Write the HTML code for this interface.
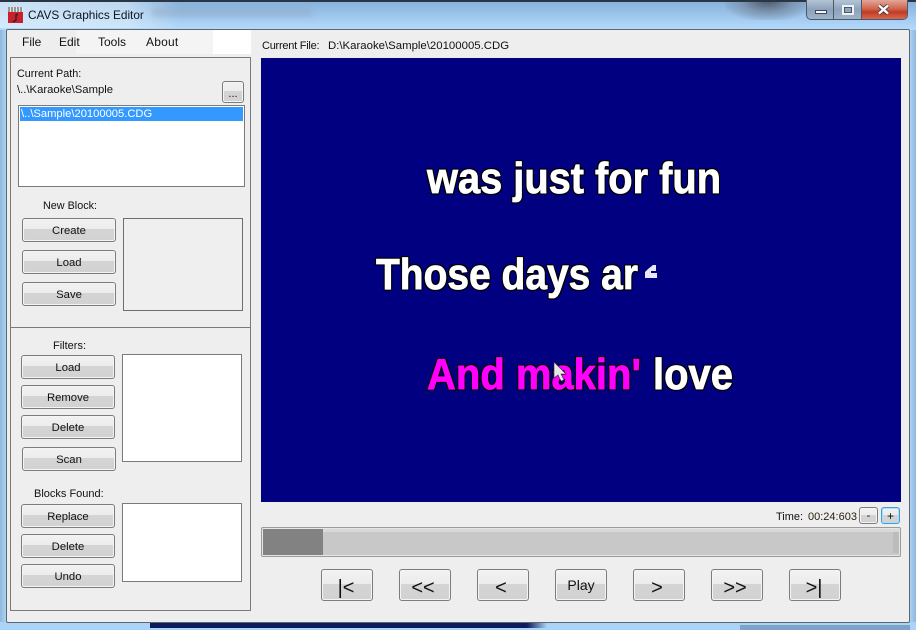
<!DOCTYPE html>
<html><head><meta charset="utf-8"><style>
html,body{margin:0;padding:0;width:916px;height:630px;overflow:hidden;background:#a9d2f5;font-family:"Liberation Sans",sans-serif;font-size:12px;color:#111}
div{position:absolute;box-sizing:border-box}
.l{white-space:nowrap;line-height:16px;font-size:11px}
.b{border:1px solid #7c7c7c;border-radius:3px;background:linear-gradient(#f2f2f2 0,#ececec 46%,#d4d4d4 46%,#d2d2d2 100%);box-shadow:inset 0 0 0 1px #f4f4f4;text-align:center;line-height:25px;white-space:nowrap;font-size:11.3px}
.n{font-size:20px;line-height:36px;top:569px;height:32px;width:52px;text-indent:-3px;background:linear-gradient(#f2f2f2 0,#ececec 46%,#d4d4d4 46%,#d2d2d2 100%)}
.w{background:#fff;border:1px solid #7a7a7a}
</style></head><body>
<div style="left:0;top:0;width:916px;height:30px;background:linear-gradient(#84afdb 0,#93bce3 30%,#a9d1f5 75%,#b6daf9 100%)"></div>
<div style="left:0;top:2px;width:180px;height:26px;background:linear-gradient(90deg,rgba(225,240,252,.75),rgba(225,240,252,.6) 70%,transparent)"></div>
<div style="left:152px;top:8px;width:160px;height:9px;background:#8da3bb;opacity:.4;filter:blur(3px)"></div>
<div style="left:725px;top:0;width:85px;height:20px;background:radial-gradient(ellipse at 50% 0,#4a5566 0,#7f98b5 45%,transparent 80%)"></div>
<div style="left:0;top:0;width:916px;height:2px;background:#2b3645"></div>
<div style="left:0;top:30px;width:7px;height:592px;background:linear-gradient(90deg,#8fb8dc,#b1d6f6)"></div>
<div style="left:909px;top:30px;width:7px;height:592px;background:linear-gradient(90deg,#b1d6f6,#8fb8dc)"></div>
<div style="left:0;top:622px;width:916px;height:8px;background:#abd3f6"></div>
<div style="left:150px;top:623px;width:377px;height:5px;background:#0d1b5c"></div>
<div style="left:527px;top:623px;width:20px;height:5px;background:linear-gradient(90deg,#0d1b5c,#abd3f6)"></div>
<div style="left:740px;top:625px;width:170px;height:5px;background:#7fa3c6"></div>

<svg style="position:absolute;left:7px;top:6px" width="17" height="18" viewBox="0 0 17 18"><rect x="1" y="6" width="15" height="11" fill="#c8202c"/><rect x="1" y="1" width="15" height="5" fill="#e8e8e8"/><path d="M2 1v5M5 1v5M8 1v5M11 1v5M14 1v5" stroke="#444" stroke-width="1"/><path d="M9 8v6l-3 2M9 8l2 1" stroke="#222" stroke-width="1.3" fill="none"/></svg>
<div class="l" style="left:28px;top:7px;font-size:11.8px;color:#0c1420">CAVS Graphics Editor</div>

<div style="left:806px;top:0;width:102px;height:20px;border:1px solid #4c5866;border-top:0;border-radius:0 0 5px 5px;overflow:hidden;background:linear-gradient(#b4c4d6,#8da2bb 50%,#9fb3c9)">
  <div style="left:26px;top:0;width:1px;height:20px;background:#4c5866"></div>
  <div style="left:54px;top:0;width:1px;height:20px;background:#4c5866"></div>
  <div style="left:55px;top:0;width:47px;height:20px;background:linear-gradient(#e2a79a,#d0624a 45%,#c23b22 60%,#d8705a)"></div>
  <div style="left:8px;top:10px;width:12px;height:4px;background:#f4f6f9;border:1px solid #3c4858"></div>
  <div style="left:35px;top:5px;width:12px;height:10px;border:2px solid #eef2f6;outline:1px solid #4c5866;outline-offset:-3px"></div>
  <svg style="position:absolute;left:70px;top:4px" width="13" height="11"><path d="M2 1.5L11 9.5M11 1.5L2 9.5" stroke="#3a3a3a" stroke-width="4"/><path d="M2 1.5L11 9.5M11 1.5L2 9.5" stroke="#fff" stroke-width="2.4"/></svg>
</div>

<div style="left:6px;top:29px;width:904px;height:594px;background:#eeeeee;border:1px solid #5d6773;border-radius:2px"></div>
<div style="left:76px;top:30px;width:137px;height:24px;background:#f4f4f4"></div>
<div style="left:213px;top:30px;width:38px;height:24px;background:#fff"></div>
<div class="l" style="left:22px;top:34px;font-size:12px">File</div>
<div class="l" style="left:59px;top:34px;font-size:12px">Edit</div>
<div class="l" style="left:98px;top:34px;font-size:12px">Tools</div>
<div class="l" style="left:146px;top:34px;font-size:12px;letter-spacing:.2px">About</div>

<div style="left:10px;top:57px;width:241px;height:554px;border:1px solid #7a7a7a"></div>
<div style="left:10px;top:327px;width:241px;height:1px;background:#7a7a7a"></div>

<div class="l" style="left:17px;top:66px;font-size:10.8px">Current Path:</div>
<div class="l" style="left:17px;top:82px;font-size:11.3px">\..\Karaoke\Sample</div>
<div class="b" style="left:222px;top:81px;width:22px;height:22px;line-height:25px;font-size:11px">...</div>
<div class="w" style="left:18px;top:105px;width:227px;height:82px"></div>
<div class="l" style="left:20px;top:107px;width:223px;height:14px;background:#3399ff;color:#fff;padding-left:1px;line-height:15px;font-size:11.2px">\..\Sample\20100005.CDG</div>

<div class="l" style="left:43px;top:198px;font-size:10.8px">New Block:</div>
<div class="b" style="left:22px;top:218px;width:94px;height:24px">Create</div>
<div class="b" style="left:22px;top:250px;width:94px;height:24px">Load</div>
<div class="b" style="left:22px;top:282px;width:94px;height:24px">Save</div>
<div style="left:123px;top:218px;width:120px;height:93px;border:1px solid #6e6e6e;background:#efefef"></div>

<div class="l" style="left:53px;top:338px">Filters:</div>
<div class="b" style="left:21px;top:355px;width:94px;height:24px">Load</div>
<div class="b" style="left:21px;top:385px;width:94px;height:24px">Remove</div>
<div class="b" style="left:21px;top:415px;width:94px;height:24px">Delete</div>
<div class="b" style="left:22px;top:447px;width:94px;height:24px">Scan</div>
<div class="w" style="left:122px;top:354px;width:120px;height:108px"></div>

<div class="l" style="left:34px;top:486px">Blocks Found:</div>
<div class="b" style="left:21px;top:504px;width:94px;height:24px">Replace</div>
<div class="b" style="left:21px;top:534px;width:94px;height:24px">Delete</div>
<div class="b" style="left:21px;top:564px;width:94px;height:24px">Undo</div>
<div class="w" style="left:122px;top:503px;width:120px;height:79px"></div>

<div class="l" style="left:262px;top:38px;font-size:11px;letter-spacing:-.25px">Current File:</div>
<div class="l" style="left:328px;top:38px;font-size:11.4px">D:\Karaoke\Sample\20100005.CDG</div>

<svg style="position:absolute;left:261px;top:58px" width="640" height="444" viewBox="261 58 640 444">
<rect x="261" y="58" width="640" height="444" fill="#000080"/>
<g font-family="Liberation Sans" font-weight="bold" font-size="44" fill="#fff" stroke="#fff" stroke-width=".8" style="filter:drop-shadow(1px 0 0 #000) drop-shadow(-1px 0 0 #000) drop-shadow(0 1px 0 #000) drop-shadow(0 -1px 0 #000)">
<text x="427" y="193" textLength="294" lengthAdjust="spacingAndGlyphs">was just for fun</text>
<text x="376" y="289" textLength="262" lengthAdjust="spacingAndGlyphs">Those days ar</text>
<text x="427" y="389" textLength="214" lengthAdjust="spacingAndGlyphs" fill="#ff00ff" stroke="#ff00ff">And makin'</text>
<text x="653" y="389" textLength="80" lengthAdjust="spacingAndGlyphs">love</text>
</g>
<path d="M653 265h3v6h-5v2h6v5h-12v-6l3-3z" fill="#e6e8f8"/>
<path d="M554 362v16l4-3 3 6 3-1-3-6h5z" fill="#e8e8e8" stroke="#333" stroke-width=".6"/>
</svg>

<div class="l" style="left:776px;top:509px">Time:</div>
<div class="l" style="left:808px;top:509px;font-size:11px;color:#2a2010">00:24:603</div>
<div class="b" style="left:859px;top:507px;width:19px;height:17px;line-height:17px;font-size:11px">-</div>
<div class="b" style="left:881px;top:507px;width:19px;height:17px;line-height:17px;font-size:12px;border-color:#3c9fdc;box-shadow:inset 0 0 0 1px #a8e0f8">+</div>

<div style="left:261px;top:527px;width:640px;height:30px;border:1px solid #9a9a9a;border-radius:2px;background:#c8c8c8;box-shadow:inset 0 0 0 1px #e6e6e6,inset 0 4px 0 #d8d8d8"></div>
<div style="left:893px;top:532px;width:6px;height:21px;background:#bcbcbc"></div>
<div style="left:263px;top:529px;width:60px;height:26px;background:#828282"></div>

<div class="b n" style="left:321px;text-indent:-2px">|&lt;</div>
<div class="b n" style="left:399px;text-indent:-4px">&lt;&lt;</div>
<div class="b n" style="left:477px;text-indent:-4px">&lt;</div>
<div class="b n" style="left:555px;font-size:14px;line-height:30px;text-indent:0">Play</div>
<div class="b n" style="left:633px;text-indent:-4px">&gt;</div>
<div class="b n" style="left:711px;text-indent:-4px">&gt;&gt;</div>
<div class="b n" style="left:789px;text-indent:-2px">&gt;|</div>
</body></html>
